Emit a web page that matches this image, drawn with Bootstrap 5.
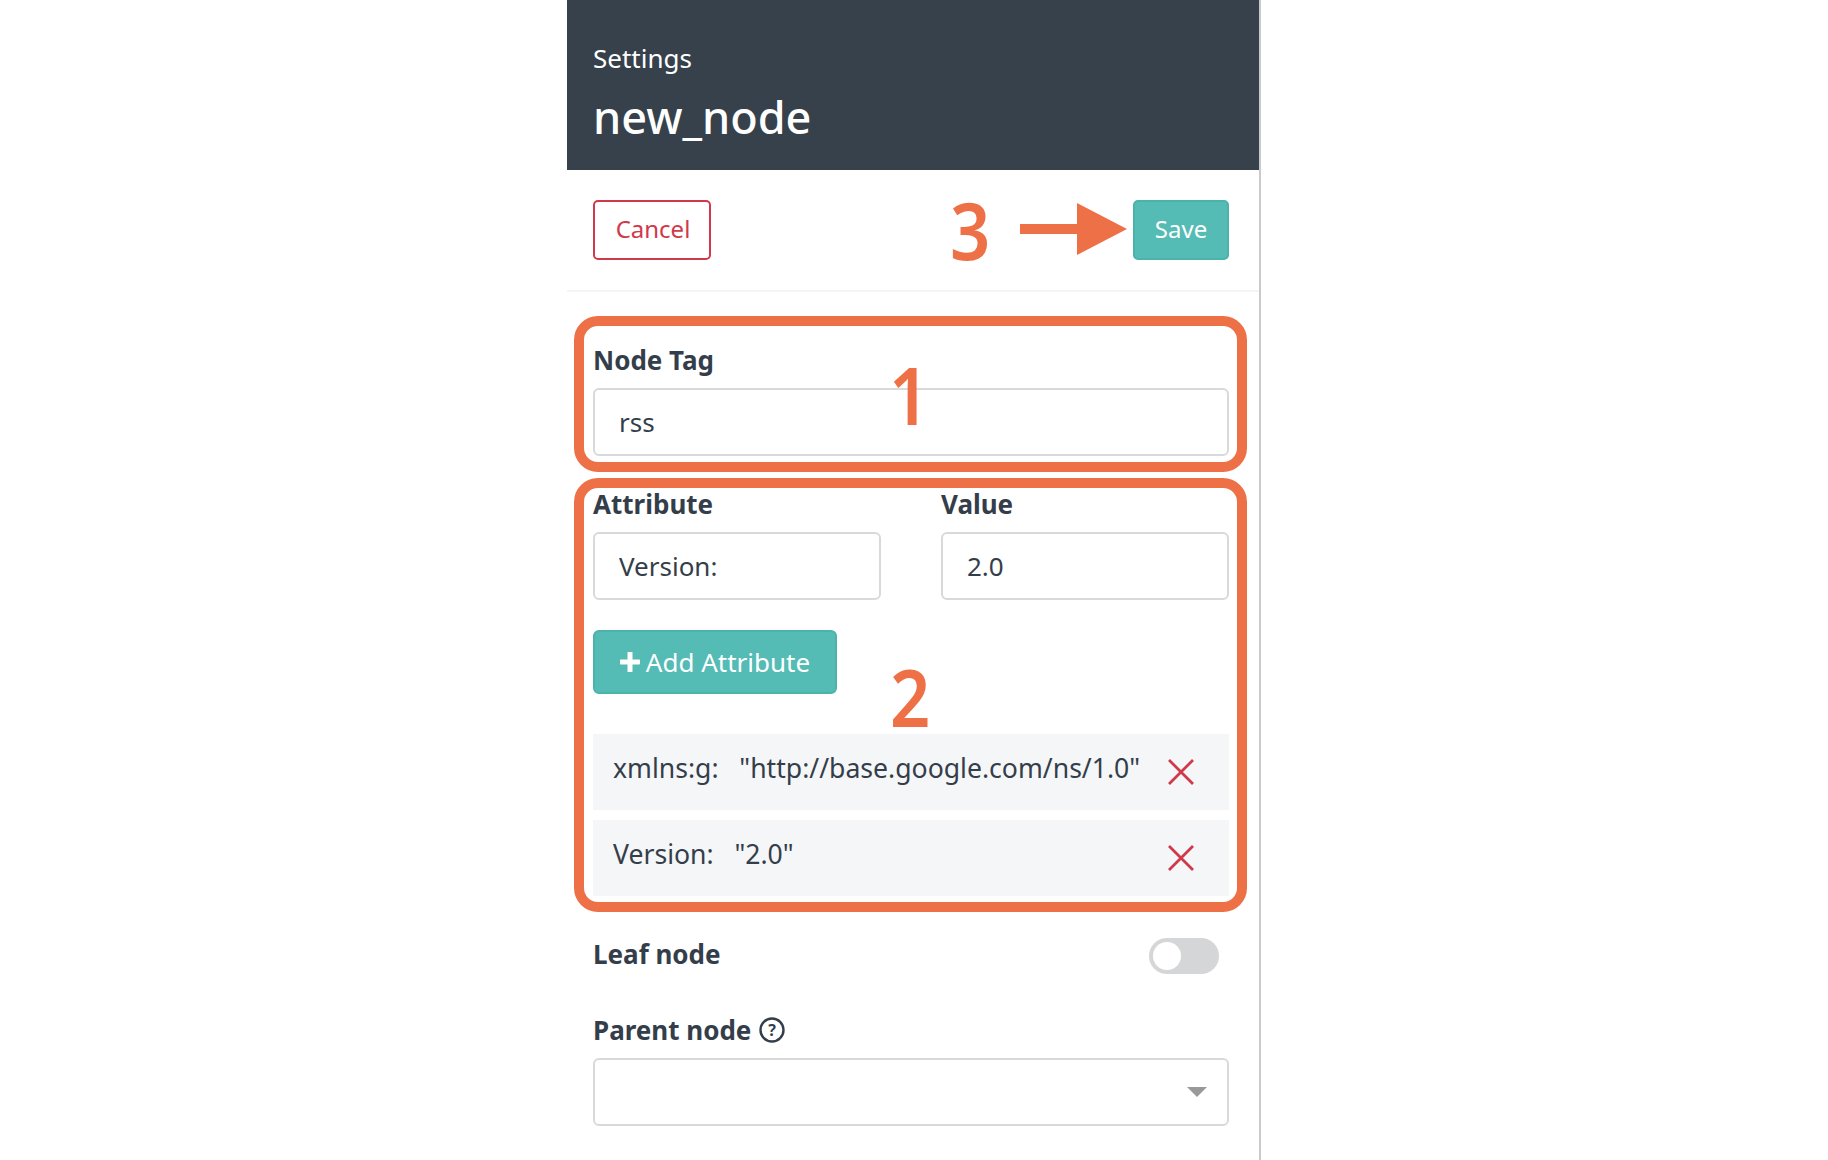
<!DOCTYPE html>
<html lang="en">
<head>
  <meta charset="UTF-8" />
  <title>Node Settings</title>
  <link href="https://cdn.jsdelivr.net/npm/bootstrap@5.3.0/dist/css/bootstrap.min.css" rel="stylesheet" />
  <style>
    html, body { height: 100%; }
    body { font-family: "Noto Sans", sans-serif; color: #343e4a; background: #fff; overflow: hidden; }
    .side-panel { width: 694px; height: 1160px; border-right: 2px solid #c9cacc; position: relative; overflow: hidden; }
    .panel-head { background: #36414b; color: #fff; height: 170px; padding: 40px 26px 0; }
    .head-small { font-size: 26px; line-height: 36px; }
    .head-title { font-size: 45px; line-height: 60px; margin-top: 11px; font-weight: 500; }
    .tool-row { height: 122px; padding: 30px 30px 0 26px; border-bottom: 2px solid #f4f5f6; }
    .btn-cancel, .btn-save { height: 60px; font-size: 24px; line-height: 1; padding: 0 0 3px; border-radius: 5px; border-width: 2px; }
    .btn-cancel { color: #d0394a; border-color: #d0394a; background: #fff; width: 118px; padding-left: 2px; }
    .btn-save { color: #fff; background: #54bbb5; border-color: #4bb2ac; width: 96px; }
    .form-body { padding: 0 30px 0 26px; }
    .field-label { display: block; font-size: 26px; line-height: 36px; font-weight: 700; margin-bottom: 10px; color: #343e4a; }
    .field-input { height: 68px; font-size: 26px; padding: 0 24px; color: #343e4a; border: 2px solid #d9d9d9; border-radius: 6px; }
    .tag-group { margin-top: 50px; }
    .attr-group { margin-top: 30px; gap: 60px; }
    .attr-group > div { flex: 1 1 0; }
    .btn-add { height: 64px; width: 244px; margin-top: 30px; font-size: 26px; color: #fff; background: #54bbb5; border: 2px solid #4bb2ac; border-radius: 6px; padding: 0; gap: 6px; }
    .attr-list { margin-top: 40px; gap: 10px; }
    .attr-item { height: 76px; background: #f5f6f8; padding: 0 20px; font-size: 26.6px; }
    .attr-item > span { position: relative; top: -3px; white-space: pre; }
    .attr-remove { margin-left: auto; margin-right: 15px; }
    .leaf-row { margin-top: 41px; height: 36px; padding-right: 10px; }
    .leaf-row .field-label { margin: 0 0 2px; }
    .leaf-switch { padding: 0; margin: 2px 0 0; min-height: 0; }
    .leaf-switch .form-check-input { width: 70px; height: 36px; margin: 0; float: none; display: block; background-color: #d5d6d8; border: 0;
      background-image: url("data:image/svg+xml,%3csvg xmlns='http://www.w3.org/2000/svg' viewBox='0 0 36 36'%3e%3ccircle cx='18' cy='18' r='14' fill='%23fff'/%3e%3c/svg%3e"); }
    .parent-group { margin-top: 39px; }
    .parent-select { height: 68px; border: 2px solid #d9d9d9; border-radius: 6px; background-size: 20px 10px; background-position: right 20px center;
      background-image: url("data:image/svg+xml,%3csvg xmlns='http://www.w3.org/2000/svg' viewBox='0 0 20 10'%3e%3cpath d='M0 0h20L10 10z' fill='%23999'/%3e%3c/svg%3e"); }
    .mark-box { position: absolute; left: 7px; width: 673px; border: 10px solid #ee7047; border-radius: 24px; pointer-events: none; }
    .mark-box-tag { top: 316px; height: 156px; }
    .mark-box-attr { top: 478px; height: 434px; }
    .mark-num { position: absolute; color: #ee7047; font-size: 80px; line-height: 1; font-weight: 600; pointer-events: none; transform: scaleX(.88); transform-origin: left top; }
    .mark-one { left: 322px; top: 354px; }
    .mark-two { left: 323px; top: 656px; }
    .mark-three { left: 383px; top: 189px; }
    .mark-arrow { position: absolute; left: 453px; top: 203px; }
  </style>
</head>
<body>
<div class="side-panel mx-auto">
  <div class="panel-head">
    <div class="head-small">Settings</div>
    <div class="head-title">new_node</div>
  </div>

  <div class="tool-row d-flex justify-content-between align-items-start">
    <button class="btn btn-cancel" type="button">Cancel</button>
    <button class="btn btn-save" type="button">Save</button>
  </div>

  <form class="form-body">
    <div class="tag-group">
      <label class="field-label" for="nodeTag">Node Tag</label>
      <input class="form-control field-input" id="nodeTag" type="text" value="rss" />
    </div>

    <div class="attr-group d-flex">
      <div>
        <label class="field-label" for="attrName">Attribute</label>
        <input class="form-control field-input" id="attrName" type="text" value="Version:" />
      </div>
      <div>
        <label class="field-label" for="attrValue">Value</label>
        <input class="form-control field-input" id="attrValue" type="text" value="2.0" />
      </div>
    </div>

    <button class="btn btn-add d-flex align-items-center justify-content-center" type="button">
      <svg width="20" height="20" viewBox="0 0 20 20"><path d="M10 1v18M1 10h18" stroke="#fff" stroke-width="5" stroke-linecap="round"/></svg>
      <span>Add Attribute</span>
    </button>

    <div class="attr-list d-flex flex-column">
      <div class="attr-item d-flex align-items-center">
        <span>xmlns:g:   "http://base.google.com/ns/1.0"</span>
        <svg class="attr-remove" width="26" height="26" viewBox="0 0 26 26"><path d="M1 1l24 24M25 1L1 25" stroke="#d0394a" stroke-width="2.8"/></svg>
      </div>
      <div class="attr-item d-flex align-items-center">
        <span>Version:   "2.0"</span>
        <svg class="attr-remove" width="26" height="26" viewBox="0 0 26 26"><path d="M1 1l24 24M25 1L1 25" stroke="#d0394a" stroke-width="2.8"/></svg>
      </div>
    </div>

    <div class="leaf-row d-flex justify-content-between align-items-center">
      <label class="field-label" for="leafNode">Leaf node</label>
      <div class="form-check form-switch leaf-switch">
        <input class="form-check-input" id="leafNode" type="checkbox" role="switch" />
      </div>
    </div>

    <div class="parent-group">
      <label class="field-label d-flex align-items-center gap-2" for="parentNode">
        Parent node
        <svg width="26" height="26" viewBox="0 0 26 26"><circle cx="13" cy="13" r="11.5" fill="none" stroke="#343e4a" stroke-width="2.4"/><text x="13" y="19" text-anchor="middle" font-family="Noto Sans, sans-serif" font-size="16" font-weight="700" fill="#343e4a">?</text></svg>
      </label>
      <select class="form-select parent-select" id="parentNode"><option></option></select>
    </div>
  </form>

  <!-- annotations drawn over the form -->
  <div class="mark-box mark-box-tag"></div>
  <div class="mark-box mark-box-attr"></div>
  <div class="mark-num mark-one">1</div>
  <div class="mark-num mark-two">2</div>
  <div class="mark-num mark-three">3</div>
  <svg class="mark-arrow" width="107" height="52" viewBox="0 0 107 52"><path d="M0 21h57V0l50 26-50 26V31H0z" fill="#ee7047"/></svg>
</div>
</body>
</html>
